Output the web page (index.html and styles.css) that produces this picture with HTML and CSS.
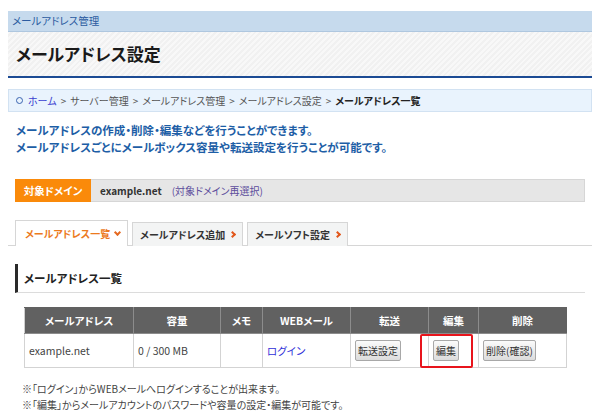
FILE: index.html
```html
<!DOCTYPE html>
<html lang="ja">
<head>
<meta charset="utf-8">
<title>メールアドレス設定</title>
<link rel="stylesheet" href="styles.css">
</head>
<body>
<div class="page">
  <div class="topbar">メールアドレス管理</div>
  <div class="title"><h1>メールアドレス設定</h1></div>
  <div class="breadcrumb">
    <span class="bc-circle"></span><a class="bc-home">ホーム</a><span class="bc-sep">&gt;</span><span class="bc-item">サーバー管理</span><span class="bc-sep">&gt;</span><span class="bc-item">メールアドレス管理</span><span class="bc-sep">&gt;</span><span class="bc-item">メールアドレス設定</span><span class="bc-sep">&gt;</span><span class="bc-current">メールアドレス一覧</span>
  </div>
  <div class="desc">
    <p>メールアドレスの作成・削除・編集などを行うことができます。</p>
    <p>メールアドレスごとにメールボックス容量や転送設定を行うことが可能です。</p>
  </div>
  <div class="domain">
    <span class="domain-label">対象ドメイン</span>
    <span class="domain-name">example.net</span>
    <a class="domain-link">(対象ドメイン再選択)</a>
  </div>
  <div class="tabs">
    <div class="tab active">メールアドレス一覧<span class="chev-down"></span></div>
    <div class="tab">メールアドレス追加<span class="chev-right"></span></div>
    <div class="tab">メールソフト設定<span class="chev-right"></span></div>
  </div>
  <h2 class="heading">メールアドレス一覧</h2>
  <table class="list">
    <colgroup>
      <col style="width:109px"><col style="width:87px"><col style="width:42px"><col style="width:88px"><col style="width:78px"><col style="width:50px"><col style="width:88px">
    </colgroup>
    <thead>
      <tr><th>メールアドレス</th><th>容量</th><th>メモ</th><th>WEBメール</th><th>転送</th><th>編集</th><th>削除</th></tr>
    </thead>
    <tbody>
      <tr>
        <td>example.net</td>
        <td>0 / 300 MB</td>
        <td></td>
        <td><a class="link">ログイン</a></td>
        <td><button class="btn">転送設定</button></td>
        <td class="edit-cell"><button class="btn">編集</button><span class="highlight"></span></td>
        <td><button class="btn">削除(確認)</button></td>
      </tr>
    </tbody>
  </table>
  <div class="notes">
    <p>※「ログイン」からWEBメールへログインすることが出来ます。</p>
    <p>※「編集」からメールアカウントのパスワードや容量の設定・編集が可能です。</p>
  </div>
</div>
</body>
</html>
```
FILE: styles.css
```css
* { box-sizing: border-box; }
body {
  margin: 0;
  background: #fff;
  font-family: "Noto Sans CJK JP", "Noto Sans", sans-serif;
  font-feature-settings: "palt";
  color: #333;
}
p { margin: 0; }
a { text-decoration: none; }
.page { padding: 11px 8px 0; }

.topbar {
  height: 21px;
  line-height: 20px;
  background: #c6daed;
  border-bottom: 1px solid #afc7df;
  color: #2b5ba0;
  font-size: 10.5px;
  padding-left: 4px;
}
.title {
  height: 46px;
  background: repeating-linear-gradient(-45deg, #f1f1f1 0 2px, #f8f8f8 2px 4px);
  border-bottom: 2px solid #1c4b94;
}
.title h1 {
  margin: 0;
  padding-left: 8px;
  line-height: 44px;
  font-size: 17px;
  font-weight: bold;
  color: #1a1a1a;
}
.breadcrumb {
  margin-top: 11px;
  height: 23px;
  line-height: 21px;
  background: #e9f3fd;
  border: 1px solid #d2e2f2;
  font-size: 10px;
  padding-left: 7px;
  display: flex;
  align-items: center;
  color: #555;
  white-space: nowrap;
}
.bc-circle {
  width: 7px; height: 7px;
  border: 1.5px solid #3a64b0;
  border-radius: 50%;
  margin-right: 5px;
}
.bc-home { color: #3a3fd0; }
.bc-sep { margin: 0 4px; color: #555; }
.bc-current { color: #222; font-weight: bold; }

.desc {
  margin-top: 10px;
  padding-left: 8px;
  font-size: 11.5px;
  line-height: 17px;
  color: #1d5ea6;
  font-weight: bold;
}

.domain {
  margin: 23px 7px 0;
  height: 23px;
  background: #e6e6e6;
  border: 1px solid #d6d6d6;
  display: flex;
  align-items: center;
  font-size: 10.5px;
  white-space: nowrap;
}
.domain-label {
  align-self: stretch;
  width: 76px;
  margin: -1px 0 -1px -1px;
  background: #fa8a0a;
  color: #fff;
  font-weight: bold;
  display: flex;
  align-items: center;
  justify-content: center;
}
.domain-name { margin-left: 9px; font-weight: bold; color: #333; font-size: 10px; }
.domain-link { margin-left: 10px; color: #5c4c9c; font-size: 10px; }

.tabs {
  margin-top: 18px;
  display: flex;
  gap: 4px;
  padding-left: 7px;
  border-bottom: 1px solid #d6d6d6;
  height: 26px;
  align-items: flex-end;
}
.tab {
  height: 24px;
  margin-bottom: -1px;
  border: 1px solid #d6d6d6;
  border-bottom: none;
  background: #f3f4f4;
  font-size: 10px;
  font-weight: bold;
  color: #333;
  display: flex;
  align-items: center;
  padding: 0 7px 0 7px;
  white-space: nowrap;
}
.tab.active {
  height: 26px;
  background: #fff;
  color: #ec7a1e;
  padding: 0 7px 0 9px;
}
.chev-right, .chev-down {
  display: inline-block;
  width: 5px; height: 5px;
  border-right: 2px solid #e2571c;
  border-bottom: 2px solid #e2571c;
  margin-left: 5px;
}
.chev-right { transform: rotate(-45deg); }
.chev-down { transform: rotate(45deg); margin-top: -3px; margin-left: 5px; border-color: #e56a22; }

.heading {
  margin: 18px 7px 0;
  height: 29px;
  border-left: 3px solid #2a2a2a;
  border-bottom: 1px solid #dcdcdc;
  padding-left: 6px;
  font-size: 11.5px;
  font-weight: bold;
  color: #222;
  line-height: 28px;
}

.list {
  margin: 14px 0 0 16px;
  width: 542px;
  border-collapse: collapse;
  table-layout: fixed;
  font-size: 10.5px;
}
.list th {
  height: 26px;
  background: #616161;
  color: #fff;
  font-weight: bold;
  border: 1px solid #8c8c8c;
  border-top-color: #616161;
  text-align: center;
  padding: 0;
}
.list th:first-child { border-left-color: #cfcfcf; }
.list th:last-child { border-right-color: #616161; }
.list td {
  height: 34px;
  border: 1px solid #d3d3d3;
  padding: 0 4px;
  color: #444;
}
.link { color: #3030d8; }
.btn {
  height: 21px;
  padding: 0 2px;
  font-family: inherit;
  font-feature-settings: "palt";
  font-size: 10px;
  color: #333;
  background: linear-gradient(#fbfbfb, #dcdcdc);
  border: 1px solid #a8a8a8;
  border-radius: 2px;
}
.edit-cell { position: relative; }
.highlight {
  position: absolute;
  left: -9px;
  top: 0;
  width: 53px;
  height: 34px;
  border: 2px solid #e8141c;
  border-radius: 2px;
}

.notes {
  margin-top: 13px;
  padding-left: 14px;
  font-size: 10px;
  line-height: 16px;
  color: #444;
}
```
